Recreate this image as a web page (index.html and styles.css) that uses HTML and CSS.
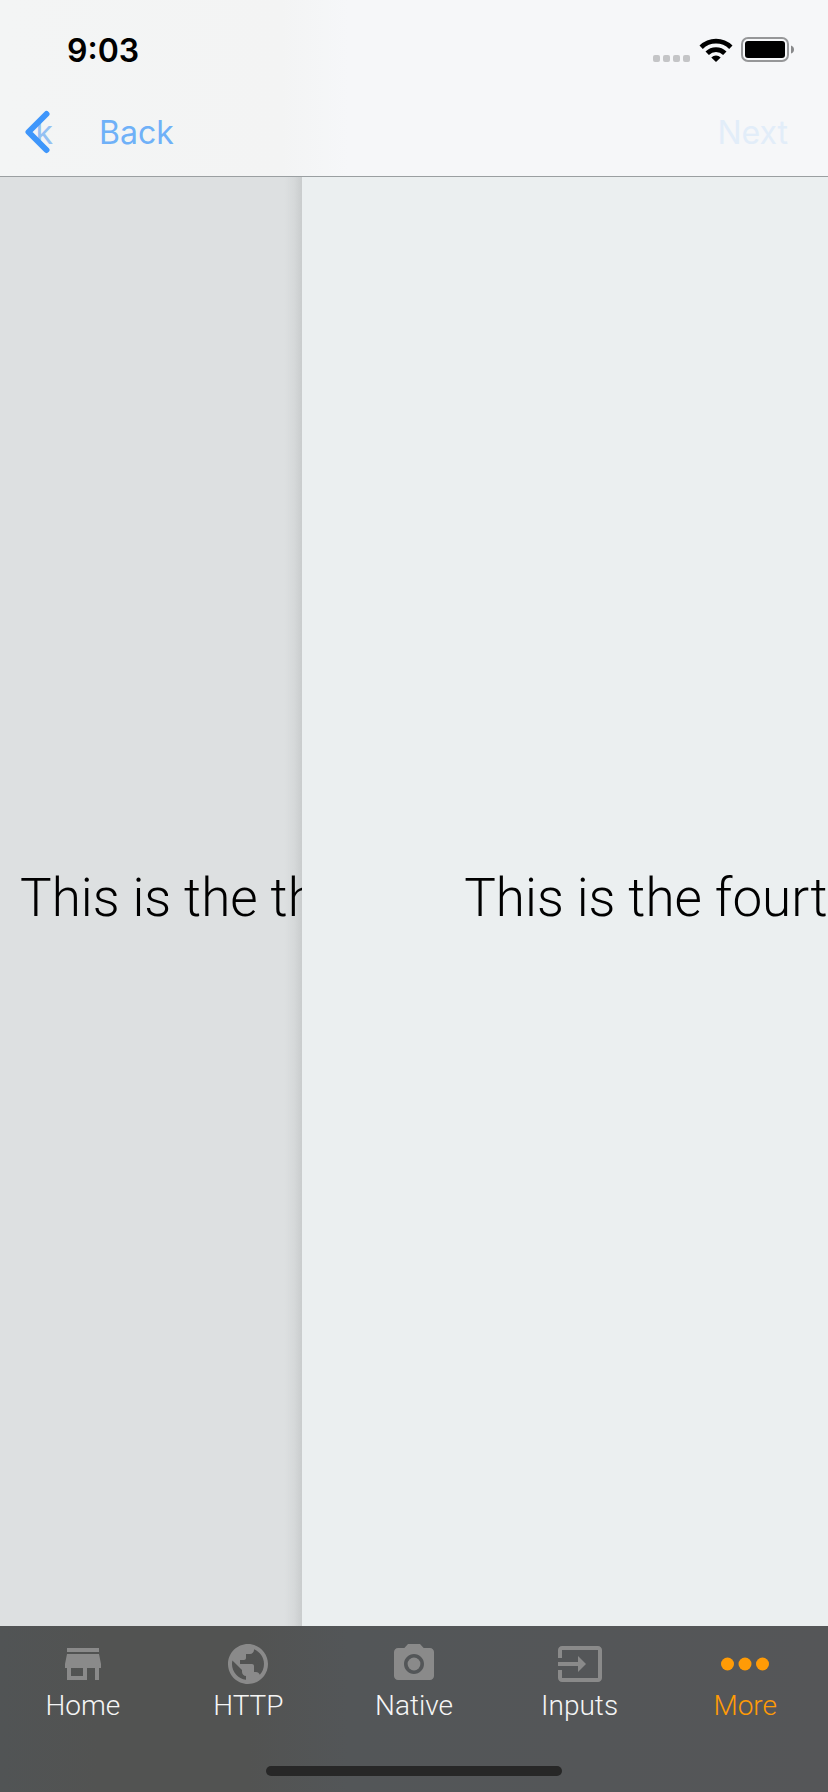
FILE: index.html
```html
<!DOCTYPE html>
<html lang="en">
<head>
<meta charset="utf-8">
<meta name="viewport" content="width=device-width, initial-scale=1">
<title>Fourth screen</title>
<link rel="stylesheet" href="styles.css">
</head>
<body>
<div class="app">
  <header class="header">
    <div class="status">
      <time class="clock">9:03</time>
      <div class="indicators">
        <svg class="signal" width="38" height="8" viewBox="0 0 38 8" aria-hidden="true">
          <rect x="0" y="0" width="7" height="7" rx="2"/><rect x="10" y="0" width="7" height="7" rx="2"/><rect x="20" y="0" width="7" height="7" rx="2"/><rect x="30" y="0" width="7" height="7" rx="2"/>
        </svg>
        <svg class="wifi" width="34" height="24" viewBox="0 0 34 24" aria-hidden="true">
          <path d="M.5 7.500A23.500 23.500 0 0 1 33.500 7.500L30.200 10.900A18.700 18.700 0 0 0 3.800 10.900ZM6.500 13.500A15 15 0 0 1 27.500 13.500L24.100 17A10.200 10.200 0 0 0 9.900 17ZM12.300 19.400A7 7 0 0 1 21.700 19.400L17 24Z"/>
        </svg>
        <svg class="battery" width="53" height="26" viewBox="0 0 53 26" aria-hidden="true">
          <rect class="battery-case" x="1" y="1" width="46" height="23" rx="6"/>
          <rect x="4" y="4" width="40" height="17" rx="3"/>
          <path class="battery-tip" d="M50 8.500Q53 9.500 53 12.500T50 16.500Z"/>
        </svg>
      </div>
    </div>
    <nav class="navbar" aria-label="Screen">
      <button class="nav-back" type="button" aria-label="Back">
        <svg class="chevron" width="30" height="44" viewBox="0 0 30 44" aria-hidden="true"><path d="M23.500 4 5.500 22 23.500 40"/></svg>
        <span class="leaving">k</span>
        <span class="nav-label">Back</span>
      </button>
      <button class="nav-next" type="button">Next</button>
    </nav>
  </header>
  <main class="stack">
    <section class="page page-under"><p class="message">This is the third</p></section>
    <section class="page page-over"><p class="message">This is the fourth</p></section>
  </main>
  <footer class="footer">
    <nav class="tabs" aria-label="Main">
      <a class="tab" href="#home"><svg class="icon" viewBox="0 0 24 24" aria-hidden="true"><path d="M20 4H4v2h16V4zm1 10v-2l-1-5H4l-1 5v2h1v6h10v-6h4v6h2v-6h1zm-9 4H6v-4h6v4z"/></svg><span>Home</span></a>
      <a class="tab" href="#http"><svg class="icon" viewBox="0 0 24 24" aria-hidden="true"><path d="M12 2C6.480 2 2 6.480 2 12s4.480 10 10 10 10-4.480 10-10S17.520 2 12 2zm-1 17.930c-3.950-.49-7-3.850-7-7.930 0-.62.08-1.210.21-1.790L9 15v1c0 1.100.9 2 2 2v1.930zm6.900-2.540c-.26-.81-1-1.390-1.900-1.390h-1v-3c0-.55-.45-1-1-1H8v-2h2c.55 0 1-.45 1-1V7h2c1.100 0 2-.9 2-2v-.41c2.930 1.190 5 4.060 5 7.410 0 2.080-.8 3.970-2.100 5.390z"/></svg><span>HTTP</span></a>
      <a class="tab" href="#native"><svg class="icon" viewBox="0 0 24 24" aria-hidden="true"><circle cx="12" cy="12" r="3.200"/><path d="M9 2 7.170 4H4c-1.100 0-2 .9-2 2v12c0 1.100.9 2 2 2h16c1.100 0 2-.9 2-2V6c0-1.100-.9-2-2-2h-3.170L15 2H9zm3 15c-2.760 0-5-2.240-5-5s2.240-5 5-5 5 2.240 5 5-2.240 5-5 5z"/></svg><span>Native</span></a>
      <a class="tab" href="#inputs"><svg class="icon" viewBox="0 0 24 24" aria-hidden="true"><path d="M21 3.010H3c-1.100 0-2 .9-2 2V9h2V4.990h18v14.030H3V15H1v4.010c0 1.100.9 1.980 2 1.980h18c1.100 0 2-.88 2-1.980v-14c0-1.110-.9-2-2-2zM11 16l4-4-4-4v3H1v2h10v3z"/></svg><span>Inputs</span></a>
      <a class="tab tab-active" href="#more" aria-current="page"><svg class="icon" viewBox="0 0 24 24" aria-hidden="true"><circle cx="3.250" cy="12" r="3.250"/><circle cx="12" cy="12" r="3.250"/><circle cx="20.750" cy="12" r="3.250"/></svg><span>More</span></a>
    </nav>
    <div class="home-indicator"></div>
  </footer>
</div>
</body>
</html>
```
FILE: styles.css
```css
* {
  box-sizing: border-box;
}

body {
  margin: 0;
  font-family: Inter, "Liberation Sans", sans-serif;
}

button {
  border: 0;
  padding: 0;
  background: none;
  font: inherit;
  cursor: pointer;
}

svg {
  display: block;
}

.app {
  display: flex;
  flex-direction: column;
  min-height: 100vh;
  overflow: hidden;
}

.header {
  background: linear-gradient(90deg, #f3f5f5 0%, #f3f4f4 34%, #f6f7f9 42%, #f6f7f9 100%);
  border-bottom: 1px solid #9a9fa1;
}

.status {
  display: flex;
  align-items: center;
  justify-content: space-between;
  height: 88px;
  padding: 12px 34px 0 67px;
}

.clock {
  font-size: 32px;
  font-weight: 600;
}

.indicators {
  display: flex;
  align-items: center;
  gap: 8px;
}

.signal {
  align-self: flex-end;
  fill: #c4c5c7;
}

.battery-case {
  fill: none;
  stroke: #969799;
  stroke-width: 2;
}

.battery-tip {
  fill: #88898b;
}

.navbar {
  display: flex;
  align-items: center;
  justify-content: space-between;
  height: 88px;
  padding: 0 40px 0 23px;
  font-size: 32px;
}

.nav-back {
  display: grid;
  grid-template-columns: 30px auto;
  column-gap: 46px;
  align-items: center;
  color: #6fb1f8;
}

.chevron,
.leaving {
  grid-area: 1 / 1;
}

.chevron {
  z-index: 1;
  fill: none;
  stroke: #3e96fb;
  stroke-width: 6;
  stroke-linecap: round;
  stroke-linejoin: round;
}

.leaving {
  justify-self: end;
  color: #94c1f3;
}

.nav-next {
  color: #e2edf9;
}

.stack {
  flex: 1;
  display: flex;
}

.page {
  display: flex;
  align-items: center;
  min-width: 0;
  padding-bottom: 8px;
  overflow: hidden;
}

.page-under {
  width: 36.500%;
  padding-left: 20px;
  background: linear-gradient(270deg, #c9cccd 0, #d6d9da 8px, rgb(221 224 225 / 0) 18px), #dde0e1;
}

.page-over {
  flex: 1;
  padding-left: 162px;
  background: #ebeff0;
}

.message {
  flex: none;
  margin: 0;
  font-family: Roboto, "Liberation Sans", sans-serif;
  font-size: 53px;
  font-weight: 300;
  line-height: 64px;
  white-space: nowrap;
}

.footer {
  padding: 14px 0 16px;
  background: linear-gradient(90deg, #515455 0%, #525352 12%, #525352 30%, #535658 42%, #555658 100%);
}

.tabs {
  display: grid;
  grid-template-columns: repeat(5, 1fr);
}

.tab {
  display: flex;
  flex-direction: column;
  align-items: center;
  color: #f5f5f5;
  font-family: Roboto, "Liberation Sans", sans-serif;
  font-size: 28px;
  font-weight: 300;
  line-height: 36px;
  text-decoration: none;
}

.icon {
  width: 48px;
  height: 48px;
  fill: #8a8a8a;
}

.tab-active {
  color: #ff9b06;
}

.tab-active .icon {
  fill: #ff9b06;
}

.home-indicator {
  width: 296px;
  height: 10px;
  margin: 42px auto 0;
  border-radius: 5px;
  background: #272727;
}
```
